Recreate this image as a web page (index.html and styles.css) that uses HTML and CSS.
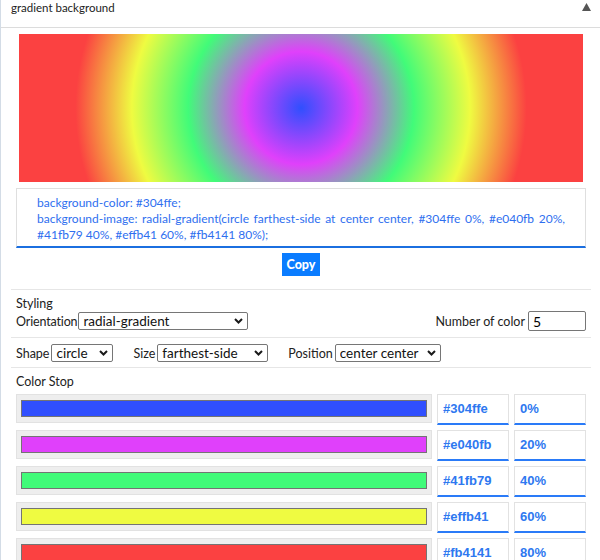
FILE: index.html
```html
<!DOCTYPE html>
<html>
<head>
<meta charset="utf-8">
<link rel="stylesheet" href="styles.css">
</head>
<body>
<div class="panel">
  <div class="head">
    <span class="title">gradient background</span>
    <svg class="caret" width="9" height="8" viewBox="0 0 9 8"><polygon points="4.5,0 9,8 0,8" fill="#555"/></svg>
  </div>
  <div class="content">
    <div class="preview"></div>
    <div class="code">
      <div class="line">background-color: #304ffe;</div>
      <div class="line justify">background-image: radial-gradient(circle farthest-side at center center, #304ffe 0%, #e040fb 20%,</div>
      <div class="line">#41fb79 40%, #effb41 60%, #fb4141 80%);</div>
    </div>
    <div class="copy-row"><button class="copy">Copy</button></div>

    <div class="sec styling">
      <div class="label">Styling</div>
      <div class="row-between">
        <label class="field-label orient">Orientation
          <span class="selwrap"><select class="sel sel-orient"><option>radial-gradient</option></select><svg class="chev" width="9" height="6" viewBox="0 0 9 6"><path d="M1 1 L4.5 4.5 L8 1" fill="none" stroke="#1a1a1a" stroke-width="2"/></svg></span>
        </label>
        <label class="field-label">Number of color <input class="num" type="text" value="5"></label>
      </div>
    </div>

    <div class="sec opts">
      <label class="field-label">Shape
        <span class="selwrap"><select class="sel sel-shape"><option>circle</option></select><svg class="chev" width="9" height="6" viewBox="0 0 9 6"><path d="M1 1 L4.5 4.5 L8 1" fill="none" stroke="#1a1a1a" stroke-width="2"/></svg></span>
      </label>
      <label class="field-label">Size
        <span class="selwrap"><select class="sel sel-size"><option>farthest-side</option></select><svg class="chev" width="9" height="6" viewBox="0 0 9 6"><path d="M1 1 L4.5 4.5 L8 1" fill="none" stroke="#1a1a1a" stroke-width="2"/></svg></span>
      </label>
      <label class="field-label">Position
        <span class="selwrap"><select class="sel sel-pos"><option>center center</option></select><svg class="chev" width="9" height="6" viewBox="0 0 9 6"><path d="M1 1 L4.5 4.5 L8 1" fill="none" stroke="#1a1a1a" stroke-width="2"/></svg></span>
      </label>
    </div>

    <div class="sec stops">
      <div class="label">Color Stop</div>
      <div class="stop-list">
        <div class="stop"><div class="swatch-box"><div class="swatch" style="background:#304ffe"></div></div><div class="val">#304ffe</div><div class="val">0%</div></div>
        <div class="stop"><div class="swatch-box"><div class="swatch" style="background:#e040fb"></div></div><div class="val">#e040fb</div><div class="val">20%</div></div>
        <div class="stop"><div class="swatch-box"><div class="swatch" style="background:#41fb79"></div></div><div class="val">#41fb79</div><div class="val">40%</div></div>
        <div class="stop"><div class="swatch-box"><div class="swatch" style="background:#effb41"></div></div><div class="val">#effb41</div><div class="val">60%</div></div>
        <div class="stop"><div class="swatch-box"><div class="swatch" style="background:#fb4141"></div></div><div class="val">#fb4141</div><div class="val">80%</div></div>
      </div>
    </div>
  </div>
</div>
</body>
</html>
```

FILE: styles.css
```css
html, body {
  margin: 0;
  padding: 0;
  background: #fff;
}
body {
  font-family: "Lato", "Liberation Sans", sans-serif;
  font-size: 12.5px;
  color: #222;
  overflow: hidden;
  height: 560px;
}
.panel {
  border-left: 1px solid #d3dce6;
  min-height: 560px;
}
.head {
  height: 27px;
  border-bottom: 1px solid #dcdcdc;
  display: flex;
  justify-content: space-between;
  align-items: flex-start;
  padding: 0 9px 0 10px;
  line-height: 16px;
  font-size: 11.5px;
}
.head .caret {
  margin-top: 3px;
}
.content {
  padding: 0 9px 0 10px;
}
.preview {
  margin: 6px 8px 0 8px;
  height: 148px;
  background-color: #304ffe;
  background-image: radial-gradient(circle farthest-side at center center, #304ffe 0%, #e040fb 20%, #41fb79 40%, #effb41 60%, #fb4141 80%);
}
.code {
  margin: 6px 5px 0 5px;
  border: 1px solid #dfdfdf;
  border-bottom: 2px solid #1b6fe0;
  padding: 6px 20px 3px 20px;
  color: #2f6fef;
  line-height: 16px;
  font-size: 12px;
}
.line {
  white-space: nowrap;
}
.line.justify {
  text-align: justify;
  text-align-last: justify;
  white-space: normal;
}
.copy-row {
  display: flex;
  justify-content: center;
  padding: 5px 0 13px;
  border-bottom: 1px solid #e6e6e6;
}
.copy {
  background: #0a7cff;
  color: #fff;
  border: none;
  border-radius: 0;
  font-family: "Lato", sans-serif;
  font-weight: 900;
  font-size: 12.5px;
  height: 23px;
  width: 38px;
  padding: 0;
}
.sec {
  padding: 0 5px;
  border-bottom: 1px solid #e6e6e6;
}
.styling {
  padding-top: 6px;
  padding-bottom: 6px;
}
.label {
  line-height: 15px;
}
.row-between {
  display: flex;
  justify-content: space-between;
  align-items: center;
}
.field-label {
  display: inline-flex;
  align-items: center;
  gap: 3px;
  line-height: 15px;
}
.field-label.orient {
  gap: 1px;
  letter-spacing: -0.15px;
}
.selwrap {
  position: relative;
  display: inline-block;
  height: 18px;
  letter-spacing: 0;
}
.sel {
  -webkit-appearance: none;
  appearance: none;
  box-sizing: border-box;
  font-family: "Lato", sans-serif;
  font-size: 13.5px;
  height: 18px;
  line-height: 16px;
  padding: 0 0 0 4px;
  margin: 0;
  border: 1px solid #767676;
  border-radius: 2px;
  background: #fff;
  color: #111;
  display: block;
}
.chev {
  position: absolute;
  right: 5px;
  top: 6px;
  pointer-events: none;
}
.sel-orient { width: 170px; }
.sel-shape { width: 62px; }
.sel-size { width: 111px; }
.sel-pos { width: 106px; }
.num {
  width: 58px;
  height: 20px;
  box-sizing: border-box;
  border: 1px solid #767676;
  border-radius: 2px;
  font-family: "Lato", sans-serif;
  font-size: 14px;
  padding: 0 4px;
  margin: 0;
}
.opts {
  display: flex;
  align-items: center;
  gap: 20px;
  padding-top: 6px;
  padding-bottom: 5px;
}
.opts .field-label {
  gap: 2px;
}
.stops {
  border-bottom: none;
  padding-top: 6px;
}
.stops .label {
  line-height: 16px;
}
.stop-list {
  margin-top: 4px;
}
.stop {
  display: grid;
  grid-template-columns: 416px 72px 72px;
  gap: 5px;
  align-items: start;
  margin-bottom: 5px;
}
.swatch-box {
  background: #eee;
  border: 1px solid #e2e2e2;
  padding: 5px 4px;
}
.swatch {
  height: 15px;
  border: 1px solid #747474;
}
.val {
  height: 28px;
  border: 1px solid #e2e2e2;
  border-bottom: 2px solid #2a7bf8;
  font-family: "Liberation Sans", Arial, sans-serif;
  font-weight: bold;
  font-size: 13px;
  color: #2e78f0;
  line-height: 28px;
  padding-left: 5px;
}
```
